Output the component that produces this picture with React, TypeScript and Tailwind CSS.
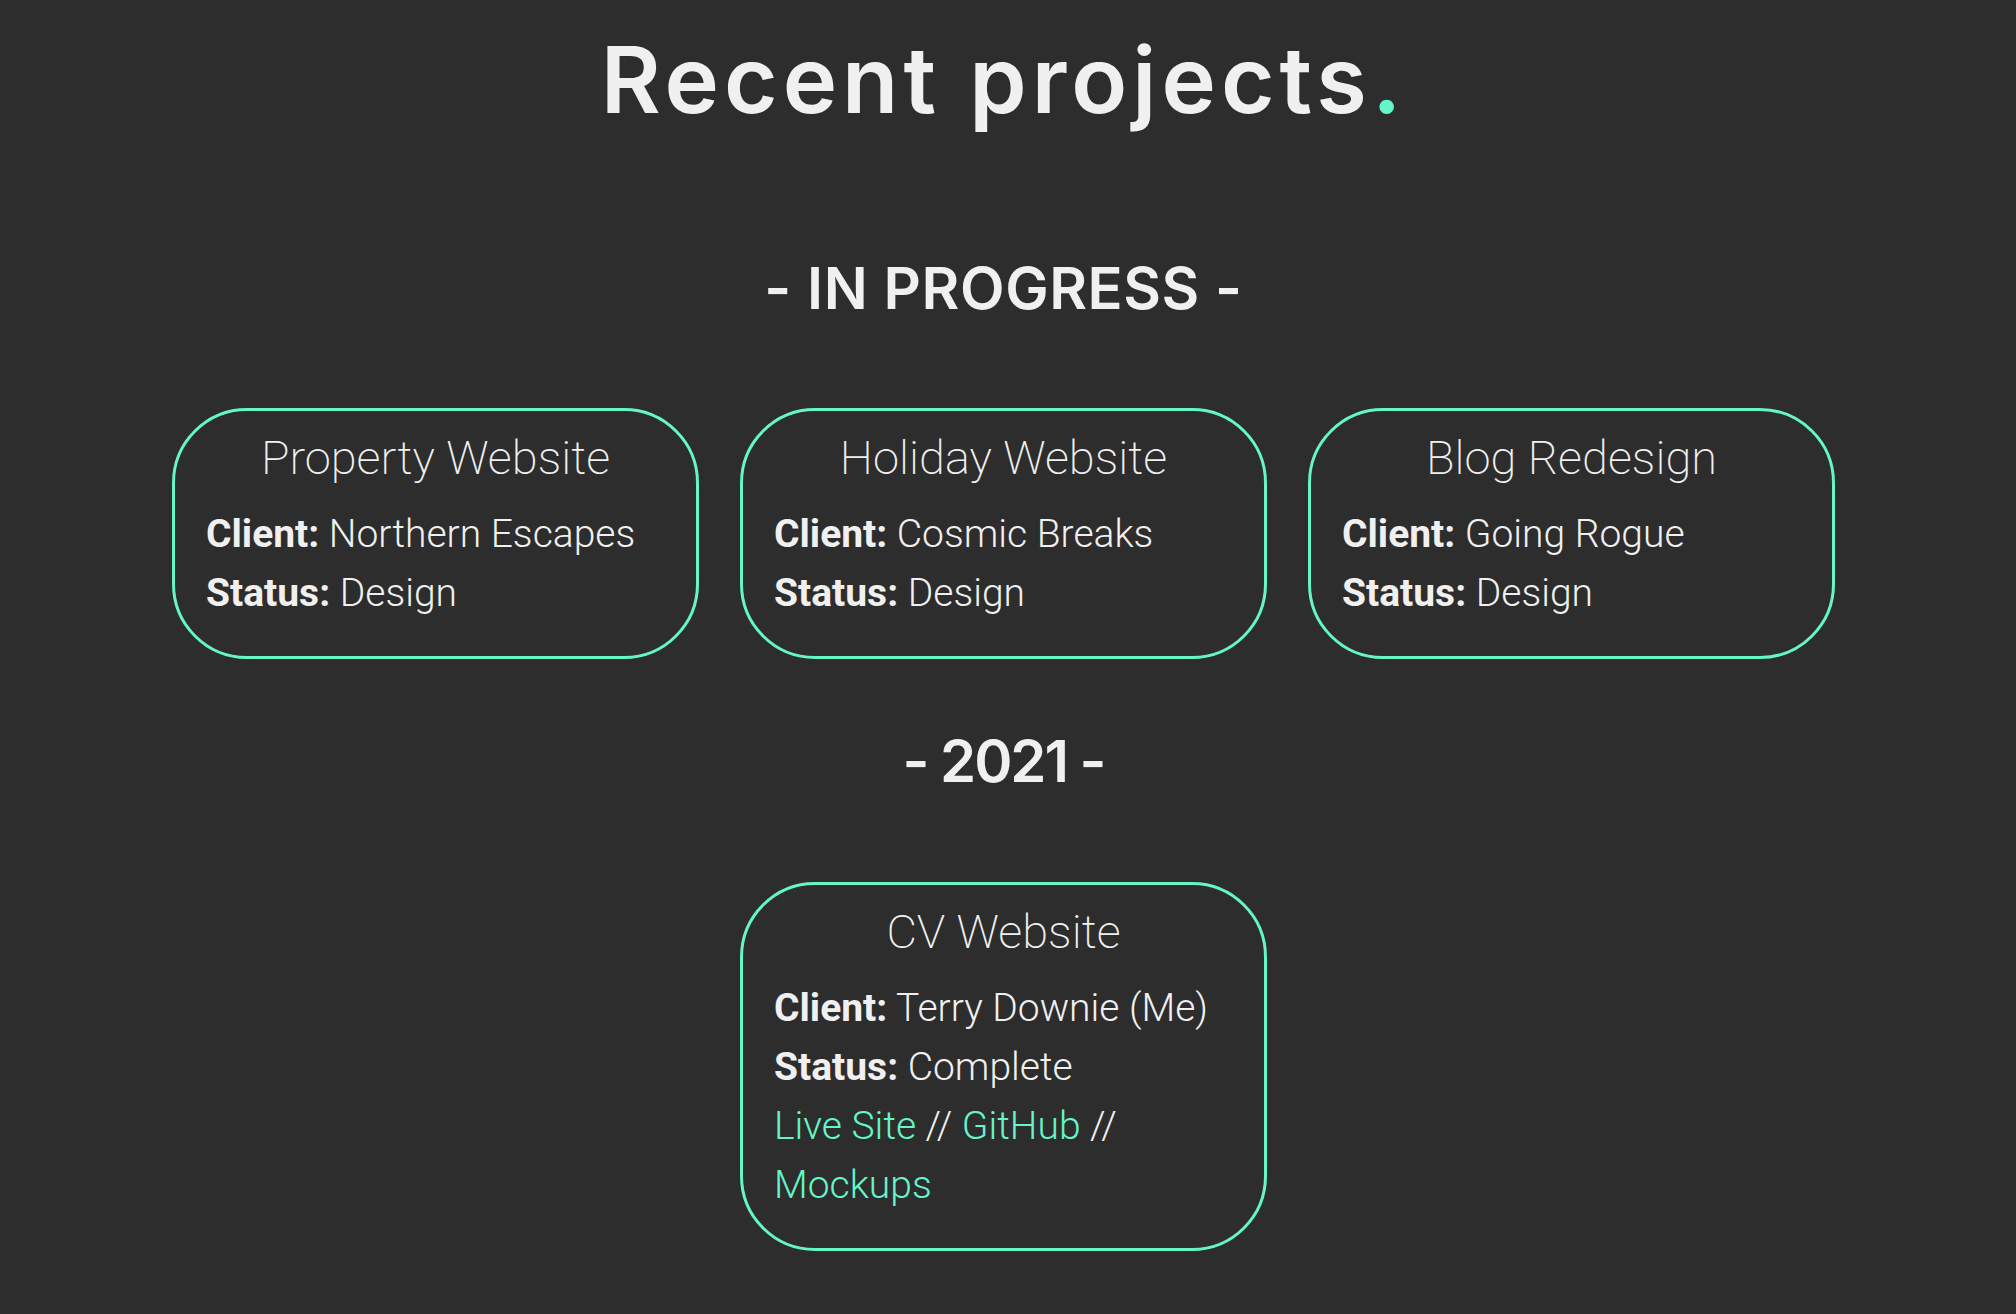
import React from "react";

// --- DATOS DE PROYECTOS ---
interface Proyecto {
  titulo: string;
  cliente: string;
  estado: string;
  enlaces?: boolean;
}

const enProgreso: Proyecto[] = [
  { titulo: "Property Website", cliente: "Northern Escapes", estado: "Design" },
  { titulo: "Holiday Website", cliente: "Cosmic Breaks", estado: "Design" },
  { titulo: "Blog Redesign", cliente: "Going Rogue", estado: "Design" },
];

const anio2021: Proyecto[] = [
  { titulo: "CV Website", cliente: "Terry Downie (Me)", estado: "Complete", enlaces: true },
];

function Tarjeta({ p }: { p: Proyecto }) {
  return (
    <div className="w-[527px] rounded-[75px] border-[3px] border-[#64f5c8] pt-[20px] pb-[33px] px-[31px] text-[#f0f0f0] font-['Roboto',sans-serif]">
      <h3 className="text-center text-[47px] leading-[54px] font-extralight mb-[20px]">{p.titulo}</h3>
      <p className="text-[39px] leading-[59px] font-light">
        <span className="font-bold">Client:</span> {p.cliente}
      </p>
      <p className="text-[39px] leading-[59px] font-light">
        <span className="font-bold">Status:</span> {p.estado}
      </p>
      {p.enlaces && (
        <p className="text-[39px] leading-[59px] font-light">
          <a className="text-[#64f5c8]">Live Site</a> // <a className="text-[#64f5c8]">GitHub</a> //{" "}
          <a className="text-[#64f5c8]">Mockups</a>
        </p>
      )}
    </div>
  );
}

export default function App() {
  return (
    <div className="min-h-screen bg-[#2d2d2d] text-[#f0f0f0] flex flex-col items-center pr-[9px] pt-[34px] pb-[60px]">
      {/* TITULO */}
      <h1 className="font-['Inter',sans-serif] font-semibold text-[92px] leading-none tracking-[0.055em]">
        Recent projects<span className="text-[#64f5c8]">.</span>
      </h1>

      <h2 className="mt-[133px] font-['Inter',sans-serif] font-semibold text-[58px] leading-none tracking-[0.01em]">
        - IN PROGRESS -
      </h2>

      <div className="mt-[91px] flex gap-[41px]">
        {enProgreso.map((p) => (
          <Tarjeta key={p.titulo} p={p} />
        ))}
      </div>

      <h2 className="mt-[73px] font-['Inter',sans-serif] font-semibold text-[58px] leading-none tracking-[-0.035em]">
        - 2021 -
      </h2>

      <div className="mt-[92px] flex gap-[41px]">
        {anio2021.map((p) => (
          <Tarjeta key={p.titulo} p={p} />
        ))}
      </div>
    </div>
  );
}
